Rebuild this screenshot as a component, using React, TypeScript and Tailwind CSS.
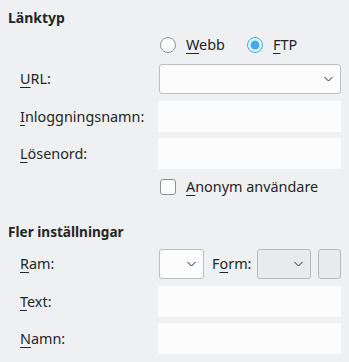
import React from "react";

const Chevron = () => (
  <svg width="9" height="6" viewBox="0 0 9 6" className="block">
    <path d="M0.5 1 L4.5 5 L8.5 1" fill="none" stroke="#232627" strokeWidth="1" />
  </svg>
);

const RadioOff = () => (
  <svg width="16" height="16" viewBox="0 0 16 16" className="block">
    <circle cx="8" cy="8" r="7.5" fill="#fcfcfc" stroke="#8f9091" strokeWidth="1" />
  </svg>
);

const RadioOn = () => (
  <svg width="16" height="16" viewBox="0 0 16 16" className="block">
    <circle cx="8" cy="8" r="7.5" fill="#e3f1fa" stroke="#3daee9" strokeWidth="1" />
    <circle cx="8" cy="8" r="5.5" fill="#fcfcfc" />
    <circle cx="8" cy="8" r="4.5" fill="#3daee9" />
  </svg>
);

const U = ({ children }: { children: React.ReactNode }) => (
  <span className="underline decoration-1 underline-offset-[3px]">{children}</span>
);

const Label = ({ children }: { children: React.ReactNode }) => (
  <div className="w-[150px] shrink-0 pl-[12px]">{children}</div>
);

const Field = () => <div className="h-[31px] w-[183px] bg-[#fcfcfc]" />;

export default function App() {
  return (
    <div
      className="w-[349px] h-[362px] bg-[#eff0f1] text-[#232627] pl-[8px] pt-[9px] flex flex-col text-[14.4px]"
      style={{ fontFamily: '"Noto Sans", "Open Sans", sans-serif' }}
    >
      <div className="h-[18px] leading-[18px] font-bold text-[14px]">Länktyp</div>

      <div className="mt-[9px] h-[18px] flex items-center">
        <div className="w-[152px] shrink-0" />
        <RadioOff />
        <span className="ml-[10px]">
          <U>W</U>ebb
        </span>
        <div className="ml-[22px]">
          <RadioOn />
        </div>
        <span className="ml-[10px]">
          <U>F</U>TP
        </span>
      </div>

      <div className="mt-[10px] h-[30px] flex items-center">
        <Label>
          <U>U</U>RL:
        </Label>
        <div className="ml-[1px] h-[30px] w-[182px] rounded-[3px] border border-[#bcbebf] bg-[#fcfcfc] flex items-center justify-end pr-[7px]">
          <Chevron />
        </div>
      </div>

      <div className="mt-[7px] h-[31px] flex items-center">
        <Label>
          <U>I</U>nloggningsnamn:
        </Label>
        <Field />
      </div>

      <div className="mt-[6px] h-[31px] flex items-center">
        <Label>
          <U>L</U>ösenord:
        </Label>
        <Field />
      </div>

      <div className="mt-[10px] h-[16px] flex items-center">
        <div className="w-[152px] shrink-0" />
        <div className="h-[16px] w-[16px] rounded-[3px] border border-[#8f9091] bg-[#fcfcfc]" />
        <span className="ml-[10px]">
          <U>A</U>nonym användare
        </span>
      </div>

      <div className="mt-[28px] h-[18px] leading-[18px] font-bold text-[13.6px]">Fler inställningar</div>

      <div className="mt-[8px] h-[30px] flex items-center">
        <Label>
          <U>R</U>am:
        </Label>
        <div className="ml-[1px] h-[30px] w-[45px] shrink-0 rounded-[3px] border border-[#bcbebf] bg-[#fcfcfc] flex items-center justify-end pr-[7px]">
          <Chevron />
        </div>
        <span className="ml-[8px] w-[45px] shrink-0">
          F<U>o</U>rm:
        </span>
        <div className="h-[30px] w-[54px] shrink-0 rounded-[3px] border border-[#b7b9ba] bg-[#e9eaeb] flex items-center justify-end pr-[7px]">
          <Chevron />
        </div>
        <div className="ml-[7px] h-[30px] w-[23px] shrink-0 rounded-[3px] border border-[#b7b9ba] bg-[#e9eaeb]" />
      </div>

      <div className="mt-[7px] h-[31px] flex items-center">
        <Label>
          <U>T</U>ext:
        </Label>
        <Field />
      </div>

      <div className="mt-[6px] h-[31px] flex items-center">
        <Label>
          <U>N</U>amn:
        </Label>
        <Field />
      </div>
    </div>
  );
}
